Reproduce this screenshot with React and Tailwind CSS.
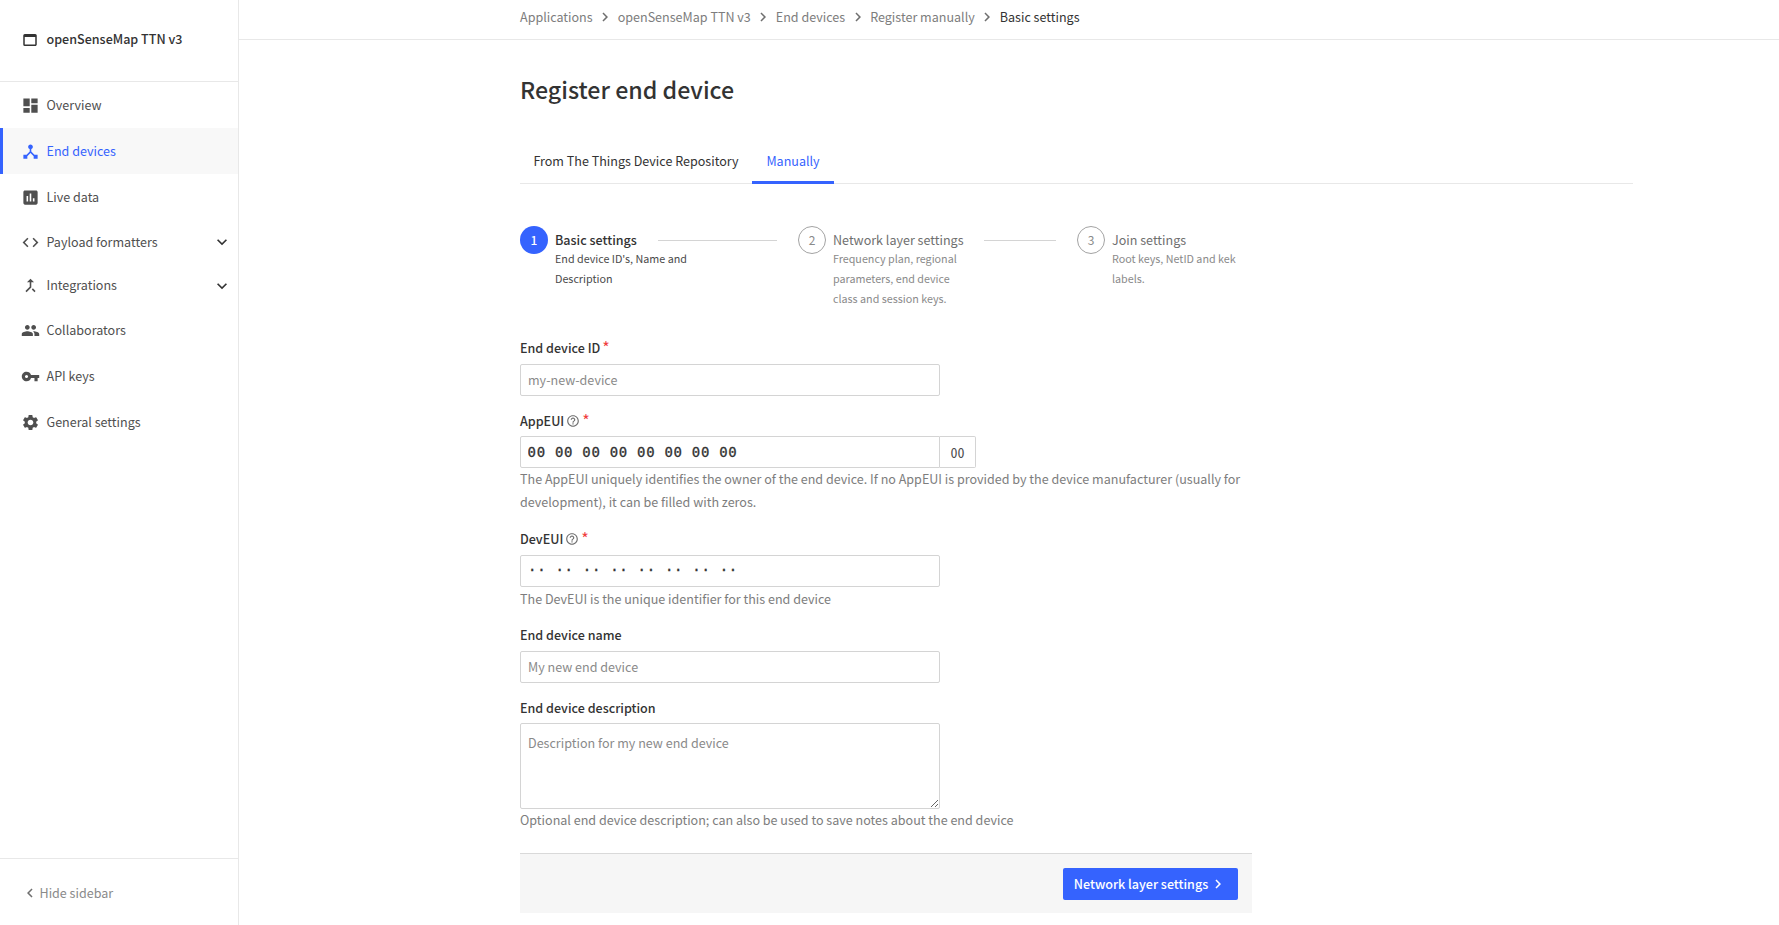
import {
  MdCallMerge,
  MdCode,
  MdDashboard,
  MdDeviceHub,
  MdHelpOutline,
  MdInsertChart,
  MdKeyboardArrowDown,
  MdKeyboardArrowLeft,
  MdKeyboardArrowRight,
  MdPeople,
  MdSettings,
  MdVpnKey,
  MdWebAsset,
} from "react-icons/md";

const navItems = [
  { label: "Overview", icon: MdDashboard, rowClass: "h-[46px]" },
  { label: "End devices", icon: MdDeviceHub, rowClass: "h-[46px]", active: true },
  { label: "Live data", icon: MdInsertChart, rowClass: "h-[46px]" },
  { label: "Payload formatters", icon: MdCode, rowClass: "h-[44px]", arrow: true },
  { label: "Integrations", icon: MdCallMerge, rowClass: "h-[43px]", arrow: true },
  { label: "Collaborators", icon: MdPeople, rowClass: "h-[46px]" },
  { label: "API keys", icon: MdVpnKey, rowClass: "h-[46px]" },
  { label: "General settings", icon: MdSettings, rowClass: "h-[46px]" },
];

const crumbs = ["Applications", "openSenseMap TTN v3", "End devices", "Register manually"];

const steps = [
  {
    n: 1,
    title: "Basic settings",
    text: "End device ID's, Name and Description",
    active: true,
    widthClass: "w-[278px]",
    lineClass: "w-[119px] ml-[21px]",
  },
  {
    n: 2,
    title: "Network layer settings",
    text: "Frequency plan, regional parameters, end device class and session keys.",
    widthClass: "w-[279px]",
    lineClass: "w-[72px] ml-[20px]",
  },
  { n: 3, title: "Join settings", text: "Root keys, NetID and kek labels." },
];

function SidebarItem({ item }) {
  const Icon = item.icon;
  return (
    <div
      className={
        "flex items-center pl-[21px] pr-[6px] relative " +
        item.rowClass +
        (item.active ? " bg-[#f8f8f8] text-[#3563fe]" : " text-[#4f4f4f]")
      }
    >
      {item.active && <div className="absolute left-0 top-0 bottom-0 w-[3px] bg-[#3563fe]" />}
      <Icon className="w-[19px] h-[19px] mr-[6.5px] shrink-0" />
      <span className="flex-1">{item.label}</span>
      {item.arrow && <MdKeyboardArrowDown className="w-5 h-5 text-[#333333]" />}
    </div>
  );
}

function Step({ step }) {
  const circle = step.active
    ? "bg-[#3563fe] text-white font-medium"
    : "border border-[#a3a3a3] text-[#8a8a8a]";
  return (
    <div className={"flex " + (step.widthClass || "")}>
      <div
        className={
          "w-7 h-7 rounded-full flex items-center justify-center text-[12px] shrink-0 mr-[7px] " + circle
        }
      >
        {step.n}
      </div>
      <div className="mt-[4px]">
        <div className="flex items-center">
          <span
            className={
              "text-[12.55px] leading-5 " +
              (step.active ? "font-medium text-[#333333]" : "text-[#6f6f6f]")
            }
          >
            {step.title}
          </span>
          {step.lineClass && <div className={"h-px bg-[#d4d4d4] " + step.lineClass} />}
        </div>
        <div
          className={
            "w-[140px] -mt-[1px] text-[10.75px] leading-5 " +
            (step.active ? "text-[#4a4a4a]" : "text-[#8a8a8a]")
          }
        >
          {step.text}
        </div>
      </div>
    </div>
  );
}

function Label({ text, help, required, className }) {
  return (
    <div className={"flex items-center h-5 font-medium text-[#333333] " + className}>
      {text}
      {help && <MdHelpOutline className="w-[14px] h-[14px] ml-[2px] text-[#6f6f6f]" />}
      {required && (
        <span className="text-[#f03e3e] font-normal text-[16px] ml-[2px] -mt-[3px] leading-none">*</span>
      )}
    </div>
  );
}

function Help({ children, className }) {
  return <p className={"leading-[23px] text-[#7d7d7d] " + (className || "")}>{children}</p>;
}

const inputClass =
  "block w-[420px] h-8 border border-[#d4d4d4] rounded-[2px] px-[7px] pb-[2px] text-[#333333] placeholder:text-[#8a8a8a] outline-none";
const monoClass = "font-['DejaVu_Sans_Mono',monospace] text-[14px] tracking-[0.7px] [-webkit-text-stroke:0.3px]";

export default function App() {
  return (
    <div className="flex h-screen overflow-hidden bg-white text-[12.55px] font-['Noto_Sans_CJK_SC','Liberation_Sans',sans-serif]">
      <aside className="w-[239px] shrink-0 border-r border-[#e8e8e8] flex flex-col">
        <div className="h-[82px] border-b border-[#e8e8e8] flex items-center pl-[21px] pb-[2px]">
          <MdWebAsset className="w-[18px] h-[18px] mr-[7.5px] text-[#333333]" />
          <span className="font-medium text-[#333333]">openSenseMap TTN v3</span>
        </div>
        <nav className="flex-1">
          {navItems.map((item) => (
            <SidebarItem key={item.label} item={item} />
          ))}
        </nav>
        <div className="h-[67px] border-t border-[#e8e8e8] flex items-center pl-[21px] pt-[2px] text-[#8a8a8a]">
          <MdKeyboardArrowLeft className="w-[18px] h-[18px] text-[#6f6f6f]" />
          <span className="ml-[0.5px]">Hide sidebar</span>
        </div>
      </aside>

      <main className="flex-1 min-w-0">
        <div className="h-10 border-b border-[#e8e8e8] flex items-center pl-[281px] pb-[5px]">
          {crumbs.map((c) => (
            <span key={c} className="flex items-center text-[#7d7d7d]">
              {c}
              <MdKeyboardArrowRight className="w-[18px] h-[18px] mx-[3.5px] text-[#6f6f6f]" />
            </span>
          ))}
          <span className="text-[#333333]">Basic settings</span>
        </div>

        <div className="pl-[281px] pr-[146px]">
          <h1 className="mt-[33px] text-[23.2px] leading-8 font-medium text-[#333333]">Register end device</h1>

          <div className="mt-[34px] flex h-[45px] border-b border-[#e8e8e8]">
            <div className="w-[232px] h-[45px] flex items-center justify-center text-[#333333] pb-[1px]">
              From The Things Device Repository
            </div>
            <div className="w-[82px] h-[45px] flex items-center justify-center text-[#3563fe] border-b-[3px] border-[#3563fe] pt-[2px]">
              Manually
            </div>
          </div>

          <div className="mt-[42px] flex">
            {steps.map((s) => (
              <Step key={s.n} step={s} />
            ))}
          </div>

          <Label text="End device ID" required className="mt-[29px]" />
          <input className={inputClass + " mt-[6px]"} placeholder="my-new-device" />

          <Label text="AppEUI" help required className="mt-[15px]" />
          <div className="flex mt-[5px] w-[456px] h-8">
            <input
              readOnly
              value="00 00 00 00 00 00 00 00"
              className={
                "w-[420px] h-8 border border-[#d4d4d4] rounded-l-[2px] px-[6.5px] text-[#333333] outline-none " +
                monoClass
              }
            />
            <div className="w-9 h-8 border border-l-0 border-[#d4d4d4] rounded-r-[2px] flex items-center justify-center text-[14px] text-[#4f4f4f] font-['Noto_Sans_Mono_CJK_SC','DejaVu_Sans_Mono',monospace]">
              00
            </div>
          </div>
          <div className="w-[732px] -mt-[1px]">
            <Help>
              The AppEUI uniquely identifies the owner of the end device. If no AppEUI is provided by the device
              manufacturer (usually for development), it can be filled with zeros.
            </Help>
          </div>

          <Label text="DevEUI" help required className="mt-[16px]" />
          <input
            readOnly
            value="·· ·· ·· ·· ·· ·· ·· ··"
            className={inputClass + " mt-[6px] pb-0 " + monoClass}
          />
          <Help>The DevEUI is the unique identifier for this end device</Help>

          <Label text="End device name" className="mt-[15px]" />
          <input className={inputClass + " mt-[6px]"} placeholder="My new end device" />

          <Label text="End device description" className="mt-[15px]" />
          <textarea
            className={inputClass + " mt-[5px] h-[86px] pt-[9px] leading-5 block"}
            placeholder="Description for my new end device"
          />
          <Help className="-mt-[1px]">
            Optional end device description; can also be used to save notes about the end device
          </Help>

          <div className="mt-[22px] w-[732px] h-[60px] border-t border-[#d9d9d9] bg-[#f6f6f6] flex items-center justify-end pr-[14px] pt-[1px]">
            <button className="h-8 w-[175px] bg-[#3563fe] rounded-[2px] text-white font-medium flex items-center justify-center">
              Network layer settings
              <MdKeyboardArrowRight className="w-[18px] h-[18px] ml-[1px]" />
            </button>
          </div>
        </div>
      </main>
    </div>
  );
}
